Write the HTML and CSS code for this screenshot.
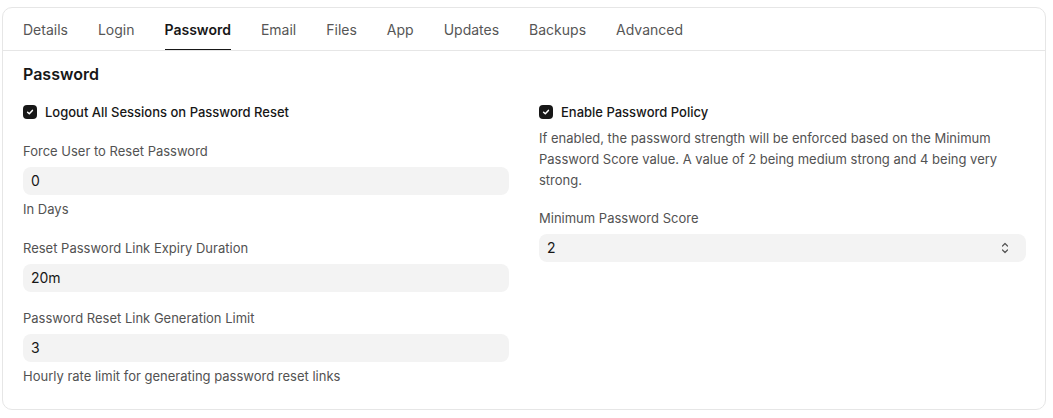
FILE: index.html
```html
<!DOCTYPE html>
<html>
<head>
<meta charset="utf-8">
<link rel="stylesheet" href="styles.css">
</head>
<body>
<div class="card">
  <nav class="tabs">
    <div class="tab">Details</div>
    <div class="tab">Login</div>
    <div class="tab active">Password</div>
    <div class="tab">Email</div>
    <div class="tab">Files</div>
    <div class="tab">App</div>
    <div class="tab">Updates</div>
    <div class="tab">Backups</div>
    <div class="tab">Advanced</div>
  </nav>
  <section class="section">
    <h2 class="heading">Password</h2>
    <div class="grid">
      <div class="col">
        <label class="check">
          <span class="box"><svg width="10" height="10" viewBox="0 0 10 10"><path d="M2.6 5.2 L4.3 6.8 L7.4 3.4" fill="none" stroke="#fff" stroke-width="1.5" stroke-linecap="round" stroke-linejoin="round"/></svg></span>
          <span class="check-label">Logout All Sessions on Password Reset</span>
        </label>
        <div class="field f1">
          <div class="label">Force User to Reset Password</div>
          <div class="input">0</div>
          <div class="desc">In Days</div>
        </div>
        <div class="field f2">
          <div class="label">Reset Password Link Expiry Duration</div>
          <div class="input">20m</div>
        </div>
        <div class="field f3">
          <div class="label">Password Reset Link Generation Limit</div>
          <div class="input">3</div>
          <div class="desc">Hourly rate limit for generating password reset links</div>
        </div>
      </div>
      <div class="col">
        <label class="check">
          <span class="box"><svg width="10" height="10" viewBox="0 0 10 10"><path d="M2.6 5.2 L4.3 6.8 L7.4 3.4" fill="none" stroke="#fff" stroke-width="1.5" stroke-linecap="round" stroke-linejoin="round"/></svg></span>
          <span class="check-label">Enable Password Policy</span>
        </label>
        <p class="para">If enabled, the password strength will be enforced based on the Minimum Password Score value. A value of 2 being medium strong and 4 being very strong.</p>
        <div class="field field-select">
          <div class="label">Minimum Password Score</div>
          <div class="input select">
            <span>2</span>
            <svg width="8" height="12" viewBox="0 0 8 12"><path d="M1.5 4 L4 1.5 L6.5 4 M1.5 8 L4 10.5 L6.5 8" fill="none" stroke="#555" stroke-width="1.2" stroke-linecap="round" stroke-linejoin="round"/></svg>
          </div>
        </div>
      </div>
    </div>
  </section>
</div>
</body>
</html>
```

FILE: styles.css
```css
* { box-sizing: border-box; }
html, body { margin: 0; padding: 0; background: #fff; }
body {
  font-family: Inter, "Noto Sans", sans-serif;
  color: #171717;
  padding: 7px 7px 0 2px;
}
.card {
  border: 1px solid #e6e6e6;
  border-radius: 10px;
  height: 403px;
  overflow: hidden;
}
.tabs {
  display: flex;
  gap: 30px;
  padding: 0 20px;
  border-bottom: 1px solid #e6e6e6;
}
.tab {
  height: 42px;
  padding-top: 2px;
  line-height: 39px;
  font-size: 14px;
  color: #565656;
  border-bottom: 1px solid transparent;
}
.tab.active {
  color: #171717;
  font-weight: 600;
  border-bottom-color: #171717;
}
.section {
  padding: 11px 20px 0 20px;
}
.heading {
  margin: 0;
  font-size: 16px;
  line-height: 24px;
  font-weight: 600;
  color: #171717;
}
.grid {
  display: grid;
  grid-template-columns: 486px 487px;
  column-gap: 30px;
  margin-top: 16px;
}
.col {
  display: flex;
  flex-direction: column;
}
.check {
  display: flex;
  align-items: center;
  gap: 8px;
  height: 20px;
}
.box {
  width: 14px;
  height: 14px;
  border-radius: 4px;
  background: #171717;
  display: flex;
  align-items: center;
  justify-content: center;
}
.check-label {
  font-size: 13px;
  font-weight: 500;
  color: #171717;
}
.field {
  display: flex;
  flex-direction: column;
}
.f1 { margin-top: 21px; }
.f2 { margin-top: 23px; }
.f3 { margin-top: 18px; }
.label {
  font-size: 13px;
  line-height: 16px;
  color: #525252;
  margin-bottom: 8px;
}
.input {
  height: 28px;
  border-radius: 8px;
  background: #f3f3f3;
  font-size: 14px;
  line-height: 28px;
  padding: 0 8px;
  color: #171717;
}
.desc {
  font-size: 13px;
  line-height: 16px;
  color: #525252;
  margin-top: 6px;
}
.para {
  margin: 6px 0 0 0;
  font-size: 13px;
  line-height: 21px;
  color: #525252;
}
.field-select { margin-top: 19px; }
.select {
  display: flex;
  align-items: center;
  justify-content: space-between;
  padding-right: 17px;
}
```
